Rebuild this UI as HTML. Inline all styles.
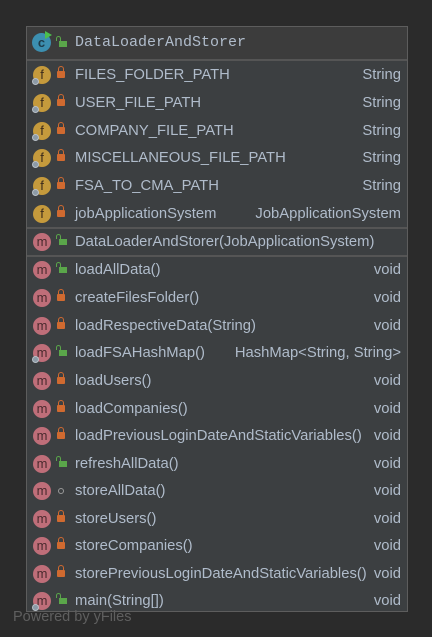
<!DOCTYPE html>
<html><head><meta charset="utf-8"><style>
body{margin:0;width:432px;height:637px;background:#2b2b2b;position:relative;overflow:hidden;font-family:"Liberation Sans",sans-serif;}
.box{position:absolute;left:26px;top:26px;width:380px;height:584px;background:#3c3f41;border:1px solid #5d5d5d;}
.hdr{position:absolute;left:0;top:0;width:380px;height:32px;background:#3c3c3c;border-bottom:2px solid #555;}
.sep{position:absolute;left:0;width:380px;height:2px;background:#555;}
.row{position:absolute;left:0;width:380px;height:26px;color:#b0bccb;font-size:14.8px;}
.ic{position:absolute;left:6px;top:4px;width:18px;height:18px;border-radius:50%;text-align:center;line-height:17px;font-size:13px;color:#3a2a1a;}
.f{background:#c59a3c;}
.m{background:#bf6e79;color:#4a2a2e;}
.st{position:absolute;left:5px;top:16px;width:5px;height:5px;border-radius:50%;background:#8c9aa6;border:1px solid #b8c0c8;}
.lk{position:absolute;left:30px;top:9px;width:8px;height:7px;background:#d06a30;border-radius:1px;}
.lk:before{content:"";position:absolute;left:1px;top:-5px;width:4px;height:4px;border:1px solid #d06a30;border-bottom:none;border-radius:3px 3px 0 0;}
.pb{position:absolute;left:32px;top:10px;width:8px;height:6px;background:#5aa64a;}
.pb:before{content:"";position:absolute;left:-3px;top:-5px;width:3px;height:4px;border:1.5px solid #5aa64a;border-bottom:none;border-radius:3px 3px 0 0;}
.dot{position:absolute;left:31px;top:10px;width:4px;height:4px;border-radius:50%;border:1px solid #999;}
.n{position:absolute;left:48px;top:5px;white-space:nowrap;}
.t{position:absolute;right:6px;top:5px;white-space:nowrap;}
</style></head><body>
<div class="box">
<div class="hdr">
<div style="position:absolute;left:5px;top:6px;width:19px;height:19px;border-radius:50%;background:#3c8fb0;color:#1d3c4a;font-size:13px;text-align:center;line-height:19px;font-weight:bold;">c</div>
<div style="position:absolute;left:18px;top:4px;width:0;height:0;border-left:7px solid #4cbf4c;border-top:4px solid transparent;border-bottom:4px solid transparent;"></div>
<div class="pb" style="top:14px;"></div>
<div style="position:absolute;left:48px;top:7px;font-family:'Liberation Mono',monospace;font-size:15px;color:#b0bccb;">DataLoaderAndStorer</div>
</div>
<div class="row" style="top:35px"><div class="ic f">f</div><div class="st"></div><div class="lk"></div><div class="n">FILES_FOLDER_PATH</div><div class="t">String</div></div>
<div class="row" style="top:63px"><div class="ic f">f</div><div class="st"></div><div class="lk"></div><div class="n">USER_FILE_PATH</div><div class="t">String</div></div>
<div class="row" style="top:91px"><div class="ic f">f</div><div class="st"></div><div class="lk"></div><div class="n">COMPANY_FILE_PATH</div><div class="t">String</div></div>
<div class="row" style="top:118px"><div class="ic f">f</div><div class="st"></div><div class="lk"></div><div class="n">MISCELLANEOUS_FILE_PATH</div><div class="t">String</div></div>
<div class="row" style="top:146px"><div class="ic f">f</div><div class="st"></div><div class="lk"></div><div class="n">FSA_TO_CMA_PATH</div><div class="t">String</div></div>
<div class="row" style="top:174px"><div class="ic f">f</div><div class="lk"></div><div class="n">jobApplicationSystem</div><div class="t">JobApplicationSystem</div></div>
<div class="sep" style="top:200px"></div>
<div class="row" style="top:202px"><div class="ic m">m</div><div class="pb"></div><div class="n">DataLoaderAndStorer(JobApplicationSystem)</div></div>
<div class="sep" style="top:228px"></div>
<div class="row" style="top:230px"><div class="ic m">m</div><div class="pb"></div><div class="n">loadAllData()</div><div class="t">void</div></div>
<div class="row" style="top:258px"><div class="ic m">m</div><div class="lk"></div><div class="n">createFilesFolder()</div><div class="t">void</div></div>
<div class="row" style="top:286px"><div class="ic m">m</div><div class="lk"></div><div class="n">loadRespectiveData(String)</div><div class="t">void</div></div>
<div class="row" style="top:313px"><div class="ic m">m</div><div class="st"></div><div class="pb"></div><div class="n">loadFSAHashMap()</div><div class="t">HashMap&lt;String, String&gt;</div></div>
<div class="row" style="top:341px"><div class="ic m">m</div><div class="lk"></div><div class="n">loadUsers()</div><div class="t">void</div></div>
<div class="row" style="top:369px"><div class="ic m">m</div><div class="lk"></div><div class="n">loadCompanies()</div><div class="t">void</div></div>
<div class="row" style="top:396px"><div class="ic m">m</div><div class="lk"></div><div class="n">loadPreviousLoginDateAndStaticVariables()</div><div class="t">void</div></div>
<div class="row" style="top:424px"><div class="ic m">m</div><div class="pb"></div><div class="n">refreshAllData()</div><div class="t">void</div></div>
<div class="row" style="top:451px"><div class="ic m">m</div><div class="dot"></div><div class="n">storeAllData()</div><div class="t">void</div></div>
<div class="row" style="top:479px"><div class="ic m">m</div><div class="lk"></div><div class="n">storeUsers()</div><div class="t">void</div></div>
<div class="row" style="top:506px"><div class="ic m">m</div><div class="lk"></div><div class="n">storeCompanies()</div><div class="t">void</div></div>
<div class="row" style="top:534px"><div class="ic m">m</div><div class="lk"></div><div class="n">storePreviousLoginDateAndStaticVariables()</div><div class="t">void</div></div>
<div class="row" style="top:561px"><div class="ic m">m</div><div class="st"></div><div class="pb"></div><div class="n">main(String[])</div><div class="t">void</div></div>
</div>
<div style="position:absolute;left:13px;top:609px;font-size:14.5px;color:#5f5f5f;">Powered by yFiles</div>
</body></html>
